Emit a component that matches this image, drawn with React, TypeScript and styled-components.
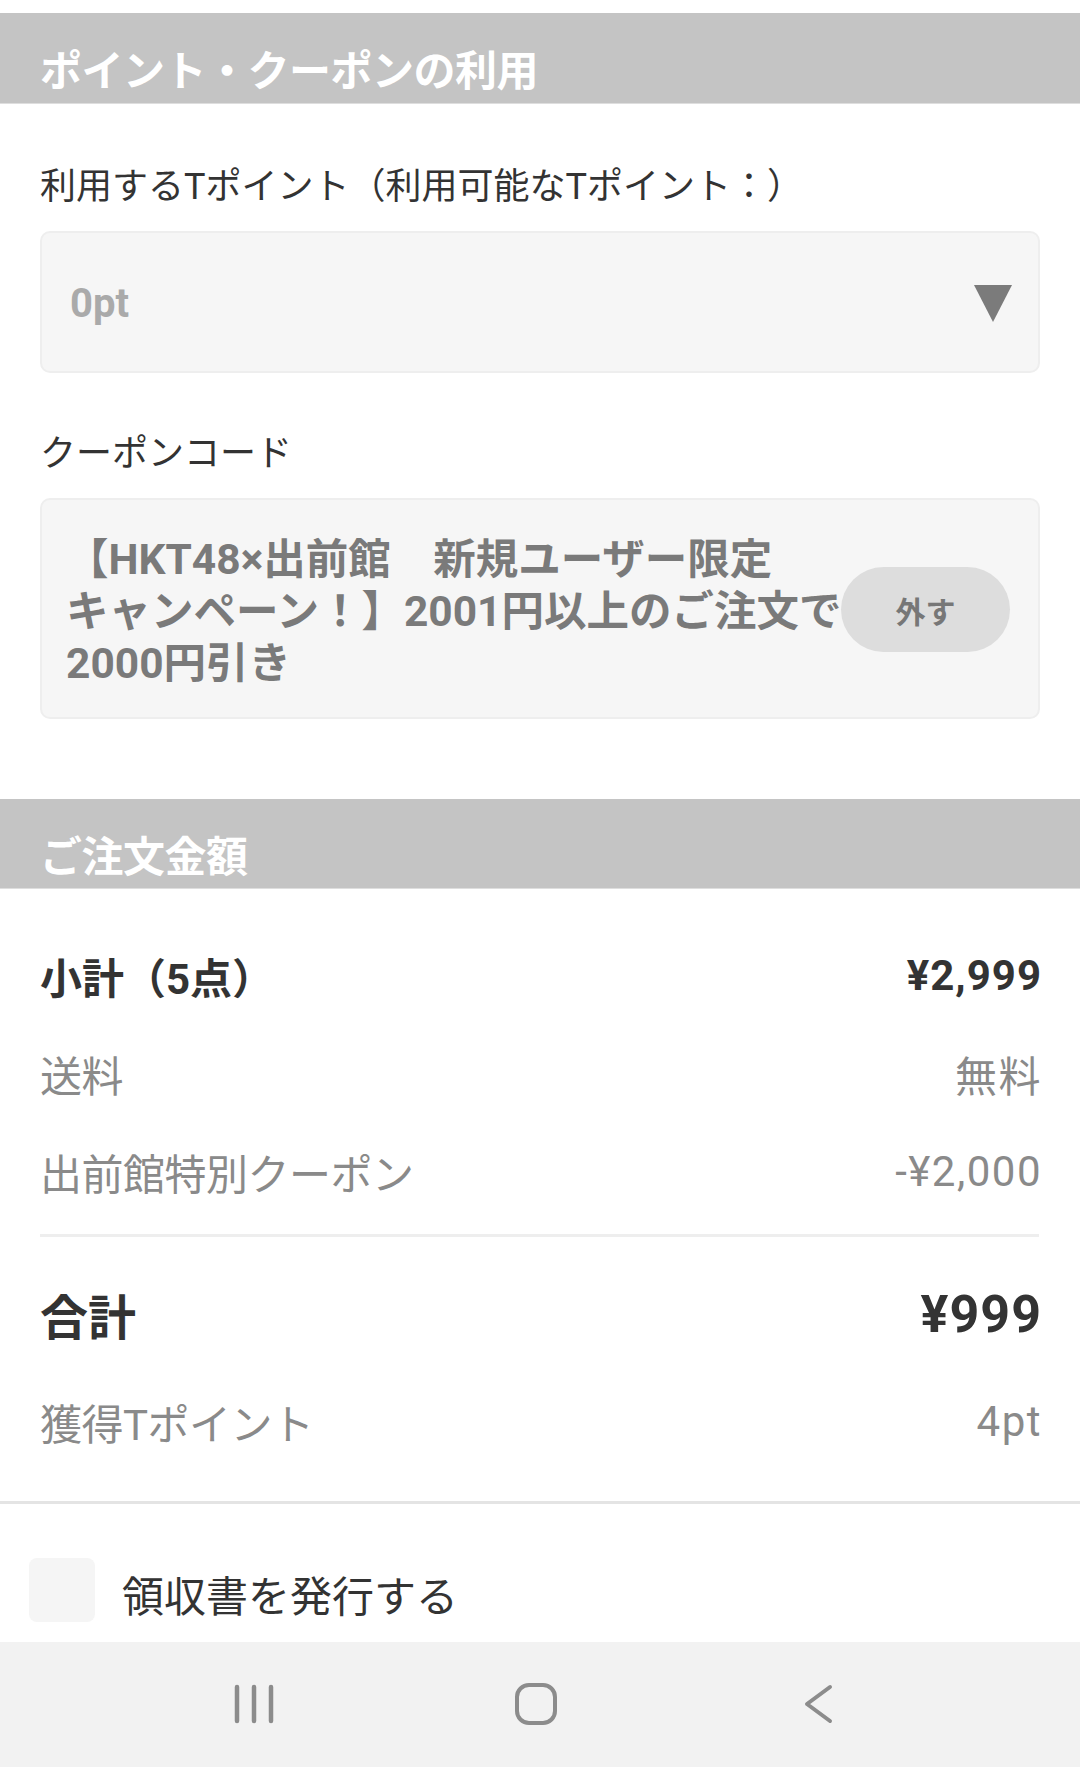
import React from 'react';
import styled, { createGlobalStyle } from 'styled-components';

const GlobalStyle = createGlobalStyle`
  html, body {
    margin: 0;
    padding: 0;
    background: #ffffff;
  }
  body {
    font-family: 'Roboto', 'Noto Sans CJK JP', sans-serif;
    color: #333333;
    overflow: hidden;
  }
`;

const Page = styled.div`
  width: 1080px;
  height: 1767px;
  padding-top: 13px;
  box-sizing: border-box;
  display: flex;
  flex-direction: column;
  background: #ffffff;
`;

const SectionHeader = styled.div`
  height: 91px;
  box-sizing: border-box;
  padding: 37px 40px 0;
  background: #c4c4c4;
  border-bottom: 1px solid #dedede;
  color: #ffffff;
  font-size: 42px;
  font-weight: 700;
  line-height: 44px;
  letter-spacing: -0.5px;
`;

const FormSection = styled.div`
  padding: 58px 40px 0;
  display: flex;
  flex-direction: column;
`;

const FieldLabel = styled.div<{ $spaced?: boolean }>`
  font-size: 36px;
  line-height: 50px;
  color: #333333;
  margin-top: ${p => (p.$spaced ? '56px' : '0')};
  margin-bottom: 19px;
`;

const SelectBox = styled.div`
  height: 142px;
  box-sizing: border-box;
  background: #f6f6f6;
  border: 2px solid #eeeeee;
  border-radius: 10px;
  display: flex;
  align-items: center;
  justify-content: space-between;
  padding: 4px 26px 0 28px;
`;

const SelectValue = styled.span`
  font-size: 40px;
  font-weight: 700;
  color: #aaaaaa;
`;

const Caret = styled.span`
  width: 0;
  height: 0;
  border-left: 19px solid transparent;
  border-right: 19px solid transparent;
  border-top: 37px solid #7b7b7b;
`;

const CouponBox = styled.div`
  min-height: 219px;
  box-sizing: border-box;
  background: #f6f6f6;
  border: 2px solid #eeeeee;
  border-radius: 10px;
  display: flex;
  align-items: center;
  padding: 34px 28px 27px 24px;
`;

const CouponText = styled.div`
  flex: 1;
  min-width: 0;
  font-size: 42.5px;
  font-weight: 700;
  line-height: 52px;
  color: #7a7a7a;
`;

const CouponLine = styled.span`
  display: block;
  white-space: nowrap;
`;

const RemoveButton = styled.button`
  flex: none;
  width: 169px;
  height: 85px;
  border: none;
  border-radius: 43px;
  background: #dddddd;
  color: #777777;
  font-family: inherit;
  font-size: 30px;
  font-weight: 700;
  margin-top: -4px;
`;

const OrderHeader = styled(SectionHeader)`
  margin-top: 80px;
`;

const Summary = styled.div`
  padding: 37px 41px 22px 40px;
  border-bottom: 3px solid #e4e4e4;
`;

const Row = styled.div<{ $height?: number }>`
  display: flex;
  align-items: center;
  justify-content: space-between;
  height: ${p => p.$height ?? 98}px;
`;

const RowText = styled.span<{ $variant: 'bold' | 'muted' | 'total' }>`
  font-size: ${p => (p.$variant === 'total' ? '48px' : '42px')};
  font-weight: ${p => (p.$variant === 'muted' ? 400 : 700)};
  color: ${p => (p.$variant === 'muted' ? '#8a8a8a' : '#333333')};
  letter-spacing: ${p => (p.$variant === 'muted' ? '-0.5px' : '0')};
`;

const RowValue = styled(RowText)`
  font-size: ${p => (p.$variant === 'total' ? '52px' : '42px')};
  letter-spacing: ${p => (p.$variant === 'muted' ? '1.5px' : '1px')};
  margin-right: -3px;
`;

const Divider = styled.div`
  height: 3px;
  background: #eeeeee;
  margin: 14px 0 28px;
`;

const ReceiptRow = styled.label`
  display: flex;
  align-items: center;
  gap: 27px;
  padding: 33px 29px 0;
  height: 138px;
  box-sizing: border-box;
`;

const CheckBox = styled.span`
  width: 66px;
  height: 64px;
  border-radius: 8px;
  background: #f5f5f5;
  flex: none;
`;

const ReceiptText = styled.span`
  font-size: 42px;
  color: #333333;
  padding-top: 8px;
`;

const NavBar = styled.div`
  height: 126px;
  margin-top: auto;
  background: #f2f2f2;
  display: flex;
  align-items: center;
  justify-content: center;
  gap: 238px;
  padding-right: 8px;
`;

const NavIcon = styled.svg`
  width: 44px;
  height: 44px;
  color: #8c8c8c;
`;

const summaryRows = [
  { label: '小計（5点）', value: '¥2,999', variant: 'bold' as const },
  { label: '送料', value: '無料', variant: 'muted' as const },
  { label: '出前館特別クーポン', value: '-¥2,000', variant: 'muted' as const },
];

const couponLines = [
  '【HKT48×出前館　新規ユーザー限定',
  'キャンペーン！】2001円以上のご注文で',
  '2000円引き',
];

const App: React.FC = () => {
  return (
    <>
      <GlobalStyle />
      <Page>
        <SectionHeader>ポイント・クーポンの利用</SectionHeader>

        <FormSection>
          <FieldLabel>利用するTポイント（利用可能なTポイント：）</FieldLabel>
          <SelectBox>
            <SelectValue>0pt</SelectValue>
            <Caret />
          </SelectBox>

          <FieldLabel $spaced>クーポンコード</FieldLabel>
          <CouponBox>
            <CouponText>
              {couponLines.map(line => (
                <CouponLine key={line}>{line}</CouponLine>
              ))}
            </CouponText>
            <RemoveButton>外す</RemoveButton>
          </CouponBox>
        </FormSection>

        <OrderHeader>ご注文金額</OrderHeader>

        <Summary>
          {summaryRows.map(row => (
            <Row key={row.label}>
              <RowText $variant={row.variant}>{row.label}</RowText>
              <RowValue $variant={row.variant}>{row.value}</RowValue>
            </Row>
          ))}
          <Divider />
          <Row $height={98}>
            <RowText $variant="total">合計</RowText>
            <RowValue $variant="total">¥999</RowValue>
          </Row>
          <Row $height={116}>
            <RowText $variant="muted">獲得Tポイント</RowText>
            <RowValue $variant="muted">4pt</RowValue>
          </Row>
        </Summary>

        <ReceiptRow>
          <CheckBox />
          <ReceiptText>領収書を発行する</ReceiptText>
        </ReceiptRow>

        <NavBar>
          <NavIcon viewBox="0 0 44 44" fill="none" stroke="currentColor" strokeWidth="4.5" strokeLinecap="round">
            <line x1="5" y1="5" x2="5" y2="39" />
            <line x1="22" y1="5" x2="22" y2="39" />
            <line x1="39" y1="5" x2="39" y2="39" />
          </NavIcon>
          <NavIcon viewBox="0 0 44 44" fill="none" stroke="currentColor" strokeWidth="4">
            <rect x="3" y="3" width="38" height="38" rx="12" />
          </NavIcon>
          <NavIcon viewBox="0 0 44 44" fill="none" stroke="currentColor" strokeWidth="4" strokeLinecap="round" strokeLinejoin="round">
            <polyline points="34,5 11,22 34,39" />
          </NavIcon>
        </NavBar>
      </Page>
    </>
  );
};

export default App;
